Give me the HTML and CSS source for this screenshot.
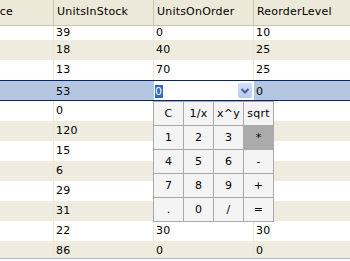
FILE: index.html
```html
<!DOCTYPE html>
<html lang="en">
<head>
    <meta charset="UTF-8">
    <meta name="viewport" content="width=device-width, initial-scale=1.0">
    <title>Products Grid</title>
    <link rel="stylesheet" href="styles.css">
</head>
<body>
    <div class="grid">
        <div class="head">
            <div class="cols">
                <div class="hcell">UnitPrice</div>
                <div class="hcell">UnitsInStock</div>
                <div class="hcell">UnitsOnOrder</div>
                <div class="hcell">ReorderLevel</div>
            </div>
        </div>

        <div class="body">
            <div class="cols row first"><div class="cell"></div><div class="cell">39</div><div class="cell">0</div><div class="cell">10</div></div>
            <div class="cols row alt"><div class="cell"></div><div class="cell">18</div><div class="cell">40</div><div class="cell">25</div></div>
            <div class="cols row"><div class="cell"></div><div class="cell">13</div><div class="cell">70</div><div class="cell">25</div></div>
            <div class="cols row sel">
                <div class="cell"></div>
                <div class="cell">53</div>
                <div class="cell editor">
                    <span class="picked">0</span>
                    <span class="drop">
                        <svg width="14" height="15" viewBox="0 0 14 15"><polyline points="3.5,6 7,9.5 10.5,6" fill="none" stroke="#4d6185" stroke-width="2"/></svg>
                    </span>
                </div>
                <div class="cell">0</div>
            </div>
            <!-- cells under the calculator are left blank -->
            <div class="cols row"><div class="cell"></div><div class="cell">0</div><div class="cell"></div><div class="cell"></div></div>
            <div class="cols row alt"><div class="cell"></div><div class="cell">120</div><div class="cell"></div><div class="cell"></div></div>
            <div class="cols row"><div class="cell"></div><div class="cell">15</div><div class="cell"></div><div class="cell"></div></div>
            <div class="cols row alt"><div class="cell"></div><div class="cell">6</div><div class="cell"></div><div class="cell"></div></div>
            <div class="cols row"><div class="cell"></div><div class="cell">29</div><div class="cell"></div><div class="cell"></div></div>
            <div class="cols row alt"><div class="cell"></div><div class="cell">31</div><div class="cell"></div><div class="cell"></div></div>
            <div class="cols row"><div class="cell"></div><div class="cell">22</div><div class="cell">30</div><div class="cell">30</div></div>
            <div class="cols row alt last"><div class="cell"></div><div class="cell">86</div><div class="cell">0</div><div class="cell">0</div></div>
        </div>
        <div class="hbar"></div>

        <!-- calculator dropdown of the UnitsOnOrder editor -->
        <div class="calc">
            <div class="key">C</div>
            <div class="key">1/x</div>
            <div class="key">x^y</div>
            <div class="key">sqrt</div>
            <div class="key">1</div>
            <div class="key">2</div>
            <div class="key">3</div>
            <div class="key hot">*</div>
            <div class="key">4</div>
            <div class="key">5</div>
            <div class="key">6</div>
            <div class="key">-</div>
            <div class="key">7</div>
            <div class="key">8</div>
            <div class="key">9</div>
            <div class="key">+</div>
            <div class="key">.</div>
            <div class="key">0</div>
            <div class="key">/</div>
            <div class="key">=</div>
        </div>
    </div>
</body>
</html>
```

FILE: styles.css
```css
body {
    margin: 0;
    font-family: "DejaVu Sans", sans-serif;
    font-size: 11px;
    letter-spacing: 0.2px;
    color: #000;
    background-color: #fff;
}
.grid {
    position: relative;
    width: 350px;
    height: 261px;
    overflow: hidden;
}
.cols {
    display: grid;
    grid-template-columns: 95px 100px 100px 100px;
    margin-left: -41px;
}
.head {
    height: 26px;
    background-color: #ece9d8;
    border-bottom: 1px solid #c8c4b2;
    box-sizing: border-box;
    overflow: hidden;
}
.hcell {
    height: 25px;
    padding: 5px 0 0 3px;
    line-height: 13px;
    border-right: 1px solid #c9c5b3;
    box-sizing: border-box;
    white-space: nowrap;
}
.body {
    height: 232px;
    overflow: hidden;
}
.row {
    height: 20px;
}
.row.first {
    height: 14px;
}
.row.last {
    height: 17px;
}
.row.alt {
    background-color: #efebde;
}
.cell {
    padding: 2px 0 0 2px;
    line-height: 15px;
    border-right: 1px solid #ebe7d9;
    box-sizing: border-box;
    white-space: nowrap;
}
.row.first .cell {
    padding-top: 0;
    line-height: 13px;
}
.row.sel {
    height: 21px;
    background-color: #b4c6e1;
    border-top: 1px solid #0a246a;
    border-bottom: 1px solid #0a246a;
    box-sizing: border-box;
}
.row.sel .cell {
    padding-top: 3px;
    border-right-color: transparent;
}
.editor {
    position: relative;
    background-color: #fff;
}
.row.sel .editor {
    padding: 4px 0 0 1px;
    line-height: 13px;
}
.picked {
    display: inline-block;
    background-color: #316ac5;
    color: #fff;
    padding: 0 1px 0 0;
}
.drop {
    position: absolute;
    right: 1px;
    top: 2px;
    width: 14px;
    height: 15px;
    border-radius: 2px;
    background: linear-gradient(#d3defb, #b8caf6);
}
.drop svg {
    display: block;
}
.hbar {
    height: 3px;
    border-top: 1px solid #a0b7da;
    background-color: #fff;
}
.calc {
    position: absolute;
    left: 153px;
    top: 101px;
    display: grid;
    grid-template-columns: repeat(4, 29px);
    grid-auto-rows: 23px;
    gap: 1px;
    padding: 1px;
    background-color: #a9a9a9;
}
.key {
    display: flex;
    justify-content: center;
    align-items: center;
    background-color: #f4f4f4;
}
.key.hot {
    background-color: #ababab;
}
```
